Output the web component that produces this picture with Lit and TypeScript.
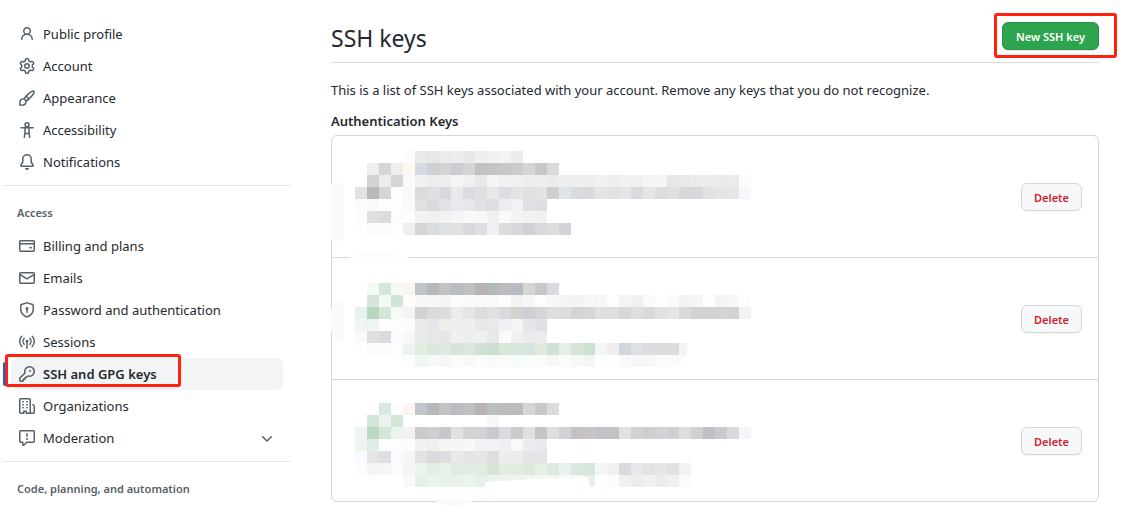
import { LitElement, html, svg, css, nothing } from "lit";
import { customElement, property } from "lit/decorators.js";
import { classMap } from "lit/directives/class-map.js";

const icons: Record<string, unknown> = {
  person: svg`<path d="M10.5 5a2.5 2.5 0 11-5 0 2.5 2.5 0 015 0zm.061 3.073a4 4 0 10-5.123 0 6.004 6.004 0 00-3.431 5.142.75.75 0 001.498.07 4.5 4.5 0 018.99 0 .75.75 0 101.498-.07 6.005 6.005 0 00-3.432-5.142z"/>`,
  gear: svg`<path d="M7.429 1.525a6.593 6.593 0 011.142 0c.036.003.108.036.137.146l.289 1.105c.147.56.55.967.997 1.189.174.086.341.183.501.29.417.278.97.423 1.53.27l1.102-.303c.11-.03.175.016.195.046.219.31.41.641.573.989.014.031.022.11-.059.19l-.815.806c-.411.406-.562.957-.53 1.456a4.588 4.588 0 010 .582c-.032.499.119 1.05.53 1.456l.815.806c.08.08.073.159.059.19a6.494 6.494 0 01-.573.99c-.02.029-.086.074-.195.045l-1.103-.303c-.559-.153-1.112-.008-1.529.27-.16.107-.327.204-.5.29-.449.222-.851.628-.998 1.189l-.289 1.105c-.029.11-.101.143-.137.146a6.613 6.613 0 01-1.142 0c-.036-.003-.108-.037-.137-.146l-.289-1.105c-.147-.56-.55-.967-.997-1.189a4.502 4.502 0 01-.501-.29c-.417-.278-.97-.423-1.53-.27l-1.102.303c-.11.03-.175-.016-.195-.046a6.492 6.492 0 01-.573-.989c-.014-.031-.022-.11.059-.19l.815-.806c.411-.406.562-.957.53-1.456a4.587 4.587 0 010-.582c.032-.499-.119-1.05-.53-1.456l-.815-.806c-.08-.08-.073-.159-.059-.19a6.44 6.44 0 01.573-.99c.02-.029.086-.075.195-.045l1.103.303c.559.153 1.112.008 1.529-.27.16-.107.327-.204.5-.29.449-.222.851-.628.998-1.189l.289-1.105c.029-.11.101-.143.137-.146zM8 0c-.236 0-.47.01-.701.03-.743.065-1.29.615-1.458 1.261l-.29 1.106c-.017.066-.078.158-.211.224a5.994 5.994 0 00-.668.386c-.123.082-.233.09-.3.071L3.27 2.776c-.644-.177-1.392.02-1.82.63a7.977 7.977 0 00-.704 1.217c-.315.675-.111 1.422.363 1.891l.815.806c.05.048.098.147.088.294a6.084 6.084 0 000 .772c.01.147-.038.246-.088.294l-.815.806c-.474.469-.678 1.216-.363 1.891.2.428.436.835.704 1.218.428.609 1.176.806 1.82.63l1.103-.303c.066-.019.176-.011.299.071.213.143.436.272.668.386.133.066.194.158.212.224l.289 1.106c.169.646.715 1.196 1.458 1.26a8.094 8.094 0 001.402 0c.743-.064 1.29-.614 1.458-1.26l.29-1.106c.017-.066.078-.158.211-.224a5.98 5.98 0 00.668-.386c.123-.082.233-.09.3-.071l1.102.302c.644.177 1.392-.02 1.82-.63.268-.382.505-.789.704-1.217.315-.675.111-1.422-.364-1.891l-.814-.806c-.05-.048-.098-.147-.088-.294a6.1 6.1 0 000-.772c-.01-.147.039-.246.088-.294l.814-.806c.475-.469.679-1.216.364-1.891a7.992 7.992 0 00-.704-1.218c-.428-.609-1.176-.806-1.82-.63l-1.103.303c-.066.019-.176.011-.299-.071a5.991 5.991 0 00-.668-.386c-.133-.066-.194-.158-.212-.224L10.16 1.29C9.99.645 9.444.095 8.701.031A8.094 8.094 0 008 0zm1.5 8a1.5 1.5 0 11-3 0 1.5 1.5 0 013 0zM11 8a3 3 0 11-6 0 3 3 0 016 0z"/>`,
  brush: svg`<path d="M11.134 1.535C9.722 2.562 8.16 4.057 6.889 5.312 5.8 6.387 5.041 7.401 4.575 8.294a3.745 3.745 0 00-3.227 1.054c-.43.431-.69 1.066-.86 1.657a11.982 11.982 0 00-.358 1.914A21.263 21.263 0 000 15.203v.054l.75-.007-.007.75h.054a14.404 14.404 0 00.654-.012 21.243 21.243 0 001.63-.118c.62-.07 1.3-.18 1.914-.357.592-.17 1.226-.43 1.657-.861a3.745 3.745 0 001.055-3.217c.908-.461 1.942-1.216 3.04-2.3 1.279-1.262 2.764-2.825 3.775-4.249.501-.706.923-1.428 1.125-2.096.2-.659.235-1.469-.368-2.07-.606-.607-1.42-.55-2.069-.34-.66.213-1.376.646-2.076 1.155zm-3.95 8.48a3.76 3.76 0 00-1.19-1.192 9.758 9.758 0 011.161-1.607l1.658 1.658a9.853 9.853 0 01-1.63 1.142zM12.016 2.749c-1.224.89-2.605 2.189-3.822 3.384l1.718 1.718c1.21-1.205 2.51-2.597 3.387-3.833.47-.662.78-1.227.912-1.662.134-.444.032-.551.009-.575h-.001V1.78c-.014-.014-.112-.113-.548.027-.432.14-.995.462-1.655.942zM1.62 13.089a19.56 19.56 0 00-.104 1.395 19.55 19.55 0 001.396-.104 10.528 10.528 0 001.668-.309c.526-.151.856-.325 1.011-.48a2.25 2.25 0 00-3.182-3.182c-.155.155-.329.485-.48 1.01a10.515 10.515 0 00-.309 1.67z"/>`,
  accessibility: svg`<g class="line"><circle cx="8" cy="2.75" r="2"/><path d="M1.9 5.75h12.2M6 6v4.6l-.7 4.6M10 6v4.6l.7 4.6M6.2 11.5h3.6"/></g>`,
  bell: svg`<path d="M8 16a2 2 0 001.985-1.75c.017-.137-.097-.25-.235-.25h-3.5c-.138 0-.252.113-.235.25A2 2 0 008 16z"/><path d="M8 1.5A3.5 3.5 0 004.5 5v2.947c0 .346-.102.683-.294.97l-1.703 2.556a.018.018 0 00-.003.01l.001.006c0 .002.002.004.004.006a.017.017 0 00.006.004l.007.001h10.964l.007-.001a.016.016 0 00.006-.004.016.016 0 00.004-.006l.001-.007a.017.017 0 00-.003-.01l-1.703-2.554a1.75 1.75 0 01-.294-.97V5A3.5 3.5 0 008 1.5zM3 5a5 5 0 0110 0v2.947c0 .05.015.098.042.139l1.703 2.555A1.518 1.518 0 0113.482 13H2.518a1.518 1.518 0 01-1.263-2.36l1.703-2.554A.25.25 0 003 7.947V5z"/>`,
  card: svg`<path d="M10.75 9a.75.75 0 000 1.5h1.5a.75.75 0 000-1.5h-1.5z"/><path d="M0 3.75C0 2.784.784 2 1.75 2h12.5c.966 0 1.75.784 1.75 1.75v8.5A1.75 1.75 0 0114.25 14H1.75A1.75 1.75 0 010 12.25v-8.5zm14.5 0V5h-13V3.75a.25.25 0 01.25-.25h12.5a.25.25 0 01.25.25zm0 2.75h-13v5.75c0 .138.112.25.25.25h12.5a.25.25 0 00.25-.25V6.5z"/>`,
  mail: svg`<path d="M1.75 2A1.75 1.75 0 000 3.75v8.5C0 13.216.784 14 1.75 14h12.5A1.75 1.75 0 0016 12.25v-8.5A1.75 1.75 0 0014.25 2H1.75zM14.5 4.07v-.32a.25.25 0 00-.25-.25H1.75a.25.25 0 00-.25.25v.32L8 7.88l6.5-3.81zm-13 1.74v6.441c0 .138.112.25.25.25h12.5a.25.25 0 00.25-.25V5.809L8.38 9.397a.75.75 0 01-.76 0L1.5 5.809z"/>`,
  shield: svg`<path d="M8.533.133a1.75 1.75 0 00-1.066 0l-5.25 1.68A1.75 1.75 0 001 3.48V7c0 1.566.32 3.182 1.303 4.682.983 1.498 2.585 2.813 5.032 3.855a1.7 1.7 0 001.33 0c2.447-1.042 4.049-2.357 5.032-3.855C14.68 10.182 15 8.566 15 7V3.48a1.75 1.75 0 00-1.217-1.667L8.533.133zm-.61 1.429a.25.25 0 01.153 0l5.25 1.68a.25.25 0 01.174.238V7c0 1.358-.275 2.666-1.057 3.86-.784 1.194-2.121 2.34-4.366 3.297a.2.2 0 01-.154 0c-2.245-.956-3.582-2.104-4.366-3.298C2.775 9.666 2.5 8.36 2.5 7V3.48a.25.25 0 01.174-.237l5.25-1.68zM9.5 6.5a1.5 1.5 0 01-.75 1.3v2.45a.75.75 0 01-1.5 0V7.8A1.5 1.5 0 119.5 6.5z"/>`,
  broadcast: svg`<path d="M8.75 8.582a1.5 1.5 0 10-1.5 0v5.668a.75.75 0 001.5 0V8.582z"/><g class="line"><path d="M2.8 2.25a7.2 7.2 0 000 10.1M13.2 2.25a7.2 7.2 0 010 10.1M5.15 4.4a4.2 4.2 0 000 5.8M10.85 4.4a4.2 4.2 0 010 5.8"/></g>`,
  key: svg`<path d="M6.5 5.5a4 4 0 112.731 3.795.75.75 0 00-.768.18L7.44 10.5H6.25a.75.75 0 00-.75.75v1.19l-.06.06H4.25a.75.75 0 00-.75.75v1.19l-.06.06H1.75a.25.25 0 01-.25-.25v-1.69l5.024-5.023a.75.75 0 00.181-.768A3.995 3.995 0 016.5 5.5zm4-5.5a5.5 5.5 0 00-5.348 6.788L.22 11.72a.75.75 0 00-.22.53v2C0 15.216.784 16 1.75 16h2a.75.75 0 00.53-.22l.5-.5a.75.75 0 00.22-.53V14h.75a.75.75 0 00.53-.22l.5-.5a.75.75 0 00.22-.53V12h.75a.75.75 0 00.53-.22l.932-.932A5.5 5.5 0 1010.5 0zm.5 6a1 1 0 100-2 1 1 0 000 2z"/>`,
  organization: svg`<path d="M1.5 14.25c0 .138.112.25.25.25H4v-1.25a.75.75 0 01.75-.75h2.5a.75.75 0 01.75.75v1.25h2.25a.25.25 0 00.25-.25V1.75a.25.25 0 00-.25-.25h-8.5a.25.25 0 00-.25.25v12.5zM1.75 16A1.75 1.75 0 010 14.25V1.75C0 .784.784 0 1.75 0h8.5C11.216 0 12 .784 12 1.75v12.5c0 .085-.006.168-.018.25h2.268a.25.25 0 00.25-.25V8.285a.25.25 0 00-.111-.208l-1.055-.703a.75.75 0 11.832-1.248l1.055.703c.487.325.779.871.779 1.456v5.965A1.75 1.75 0 0114.25 16h-3.5a.75.75 0 01-.197-.026c-.099.017-.2.026-.303.026h-3a.75.75 0 01-.75-.75V14h-1v1.25a.75.75 0 01-.75.75h-3zM3 3.75A.75.75 0 013.75 3h.5a.75.75 0 010 1.5h-.5A.75.75 0 013 3.75zM3.75 6a.75.75 0 000 1.5h.5a.75.75 0 000-1.5h-.5zM3 9.75A.75.75 0 013.75 9h.5a.75.75 0 010 1.5h-.5A.75.75 0 013 9.75zM7.75 9a.75.75 0 000 1.5h.5a.75.75 0 000-1.5h-.5zM7 6.75A.75.75 0 017.75 6h.5a.75.75 0 010 1.5h-.5A.75.75 0 017 6.75zM7.75 3a.75.75 0 000 1.5h.5a.75.75 0 000-1.5h-.5z"/>`,
  report: svg`<path d="M0 1.75C0 .784.784 0 1.75 0h12.5C15.216 0 16 .784 16 1.75v9.5A1.75 1.75 0 0114.25 13H8.06l-2.573 2.573A1.457 1.457 0 013 14.543V13H1.75A1.75 1.75 0 010 11.25v-9.5zm1.75-.25a.25.25 0 00-.25.25v9.5c0 .138.112.25.25.25h2a.75.75 0 01.75.75v2.19l2.72-2.72a.75.75 0 01.53-.22h6.5a.25.25 0 00.25-.25v-9.5a.25.25 0 00-.25-.25H1.75zM9 9a1 1 0 11-2 0 1 1 0 012 0zm-.25-5.25a.75.75 0 00-1.5 0v2.5a.75.75 0 001.5 0v-2.5z"/>`,
  chevron: svg`<path d="M12.78 6.22a.75.75 0 010 1.06l-4.25 4.25a.75.75 0 01-1.06 0L3.22 7.28a.75.75 0 011.06-1.06L8 9.94l3.72-3.72a.75.75 0 011.06 0z"/>`,
};

const icon = (name: string) =>
  html`<svg class="icon" viewBox="0 0 16 16" width="16" height="16" aria-hidden="true">${icons[name]}</svg>`;

interface NavItem {
  label: string;
  icon: string;
  current?: boolean;
  expandable?: boolean;
}

const groups: { title?: string; items: NavItem[] }[] = [
  {
    items: [
      { label: "Public profile", icon: "person" },
      { label: "Account", icon: "gear" },
      { label: "Appearance", icon: "brush" },
      { label: "Accessibility", icon: "accessibility" },
      { label: "Notifications", icon: "bell" },
    ],
  },
  {
    title: "Access",
    items: [
      { label: "Billing and plans", icon: "card" },
      { label: "Emails", icon: "mail" },
      { label: "Password and authentication", icon: "shield" },
      { label: "Sessions", icon: "broadcast" },
      { label: "SSH and GPG keys", icon: "key", current: true },
      { label: "Organizations", icon: "organization" },
      { label: "Moderation", icon: "report", expandable: true },
    ],
  },
  { title: "Code, planning, and automation", items: [] },
];

/* Each key is a redacted mosaic: rows of 12px tiles, "-" leaves a tile empty. */
interface KeyMosaic {
  top: number;
  rows: string[];
  smudges: unknown;
}

const keys: KeyMosaic[] = [
  {
    top: 15,
    rows: [
      "- - - - fcfcfc e9e9e9 e7e7e7 eaecea ecedef e6e8ea efefef eff0ef f3f3f3 eaecee",
      "- eeeeee d5d6d8 eeeeee fdf8f1 d5d9e1 cfcfd1 d4d5d1 c9ccd2 d3d5d7 c4c1c1 c0c5c7 c6c7c7 cbccd0 d7d5d3 c5c8c9 d9dade",
      "- d2d3d5 ededed d4d6d8 fafafa f1f1f1 eaeeec ebeeec f4f4f4 eef1ef e8e8e8 f4f5f5 f0f1f1 eff0f0 ededed ecefee ececeb eceef0 eeeeee ecefee f1f1f1 eeeeee f0f1f1 eff0ef f3f4f4 f5f5f5 e6e6e6 e9e9e9 ebebeb ebebeb ebe9eb ebebeb fcfcfc",
      "e3e3e3 b8b9bb d6d6d6 fefefe f9f9f8 dadada dee0e7 d9d9db eaeaea dbdce0 dfe0e2 e7e7e8 dcdde3 e4e4e4 e0e0e0 e3e3e4 cecece dfe4e8 dadbde d9dadc e5e5e5 e2e2e2 e4e6e5 dadbde e6e6e6 dddddd dfe1e3 d7d7d7 d6d8dc e2e2e2 e5e5e5 e7e7e7 f7f8fb",
      "fbfbfb fafafa fdfdfd fefefe f9f9f8 dfe1e0 dad9e0 e2e2e2 e8eaf0 e5e7ec e1e1e4 dedfe5 ecedf0 f3f1f3 dfe0e4 dedfe3",
      "fbfcfe dfdfdf dadce1 fbfcfe fdfdfd f3f3f3 f0f0f1 f2f2f2 f5f5f6 f8f9fb f8f8f9 f0f0f1 fafafa f4f4f4 f2f2f2 f0f0f2",
      "fefefe fcfcfc fcfcfc fdfefe efefef d4d5d7 dcdcde dce1e3 e1e1e2 d8d9dc dedfe4 f0f0f0 dcdddf d8d8db d0d1d6 d9d9db dddee0 d3d4d9",
    ],
    smudges: svg`<path fill="#fafafa" d="M0 48l12-1v58l-12-1z"/><path fill="#fbfcfc" d="M18 122q22-12 62 0z"/>`,
  },
  {
    top: 25,
    rows: [
      "- f6faf7 d4e7da f6faf7 faf5f0 bfc5ca b8b8bc c2c2c3 b8bcc1 c0c1c2 b6b3b3 b2b9ba bcbcbf b8bbc1 d5d5d4 c6c9c9 dadbdf",
      "- d4e5da f3f9f5 d0e5d6 fcfcfa f8f8f8 f8f8f8 f4f4f4 fcfcfc f8faf8 f8faf8 f8faf8 fcfcfc f2f2f3 f7f7f7 fdfdfd f8f8f8 f3f5f4 f3f3f3 f8f8f8 f6f6f6 fdfdfd f3f5f4 f0f0f0 f8fbf9 fdfdfd fafafa f3f3f3 f5f5f5 fefefe f4f4f4 f7f8fa fdfdfd",
      "e8f2ec b8d6c0 d3e6d8 f4faf6 f4f4f5 d2d2d2 d7dce0 dddddd ececeb e3e5e7 dadcdb e1e1e2 d9dae0 d4d1ce ced0d8 d4d5d8 dddee0 dcdddb d4d3da d6d6d7 dfe0e3 dddee0 d6d7d9 dededf d9d9d9 e1e1e3 e5e5e5 dadada d0d4d7 d1d2d4 d3d4d6 d2d3d5 f2f2f2",
      "f0f7f3 edf5f1 fdfdfd fdfdfd fdfcfa e9eaea e5e6eb eeeeeb eeeff3 eeeff3 e8e8e9 e9e9ec eff0f4 f6f4f5 e5e6ea e0e1e4",
      "fafafa dfdfdf dadbe1 fcfcfc f8f8f8 e9eaea e6e7ea e7e7e9 eeeff3 edeef0 f0f0f1 e7e8eb fafafa f0f0f0 ebebed ebecee",
      "fdfefe fcfcfc fbfbfb fdfdfd edf3ef e4ece2 dae7de e0e9e0 d6e5d7 dce7df d0e2d6 cde0d0 d9e6da d7e5dc d6e5dc e2eadb d0e2d8 e7ede7 d7e4d6 cce2d5 f4f6f5 f2eeef d2d5dc dfe0e4 dddddf dbdcde dbdcdc f2f3f6",
      "- - - - fdfdfd f0f7f3 f6f9f7 f5f8f7 f8fbf8 f5f9f7 f9fcf8 f6faf8 fafcfa f7fafa f8fcfa f8fbf6 f6f8f5 fcfcfc f5faf6 f1f8f4 fefefe fefefd f8faf9 f7f7f7 f7f7f7 fafafa fafafa fbfbfb",
    ],
    smudges: svg`<path fill="#fafafa" d="M0 52q3-9 12-10v43q-9-4-12-12z"/><path fill="#fff" d="M344 109q11-5 13-24h10v25h-23z"/>`,
  },
  {
    top: 23,
    rows: [
      "- fefefe d8e9df fefefe fbf5f0 c1c6ca b8b8bc c2c3c3 b9bdc2 bfc0c2 b6b3b3 b9c0c0 bcbcbf b9bcc1 d5d5d4 c6c9c9 dadbdf",
      "- d4e6da eaf3ed d3e6d8 - - - - - - - f5f8f7",
      "f0f7f3 bcd9c4 d3e6d9 eaf3ed f3f1f1 cbcbce cecfd3 c7c7c9 e2e1df d3d3d6 d3d3d6 c9cace dbdce0 cacbce e0e0e0 c5c5c5 dddee0 d1d2d4 c3c2c6 c9c5c7 bfc2c7 c2c2c5 e1e2e4 d1d2d4 cecdd0 d2d3d5 cfced2 dedede d0d0d2 c2bfc4 c7cbcf dadada f5f6f9",
      "edf5ef e0ece6 fdfdfd fcfefe fdfcfc f0f2f1 edeff3 f5f5f2 f3f5f9 f8f8f8 f1f2f4 f1f3f7 f0f0f2 f9f9f9 ebecf0 e9eaed",
      "f9fbfe e5e5e7 dddfe5 f9fbfe f5f6f7 e2e4e3 dbdade dddee0 e8e9ec e4e5e8 e6e6e7 dddee4 ecedec ececed e4e5e8 e4e5e8",
      "fcfcfd f3f4f4 f5f6f9 fbfbfb f2f7f4 ebf3eb e2ede4 ebf0e8 dfebe0 e3ece4 e0ebe2 d5e6d7 e3ece2 e1ebe0 dee9df e7efe4 dceae0 ebf2ed dde8dc d5e6da f3f6f5 f3f0f0 dadbe0 e7e8ea e3e3e3 e6e6e8 e2e2e3 f1f2f4",
      "- - - - f8faf8 e6f0e8 ebf3ed e9f2e9 eaf2e9 ebf3ed e7efe9 edf4ef edf4ef edf4ef f2f6f3 f3f7f3 f3f7f3 f5f9f5 f4f8f4 e5f1e9 fefefe fdfcfa eff0f2 ededee f0f0f0 ececee f0f0f0 fafafa",
    ],
    smudges: svg`<path fill="#fff" d="M153 108l2-6 48-3 54-2 2 10v2H153z"/><path fill="#fafafa" d="M104 120h40q-18 11-36 3z"/>`,
  },
];

@customElement("settings-nav")
export class SettingsNav extends LitElement {
  static styles = css`
    :host { display: block; }
    .group { padding: 7px 8px; border-bottom: 1px solid #e3e6ea; }
    .group:first-child { padding-top: 18px; }
    .group:last-child { border-bottom: 0; }
    .title {
      margin: 0;
      padding: 12px 6px 9px;
      font-size: 11px;
      line-height: 16px;
      font-weight: 600;
      color: #57606a;
    }
    .items { list-style: none; margin: 0; padding: 0; }
    .item { position: relative; }
    .link {
      display: flex;
      align-items: center;
      gap: 8px;
      padding: 6px 8px;
      border-radius: 6px;
      line-height: 20px;
      color: #24292f;
      text-decoration: none;
    }
    .label { flex: 1; white-space: nowrap; }
    .current .link { background: #f3f4f6; font-weight: 600; }
    .current::before {
      content: "";
      position: absolute;
      left: -8px;
      top: 4px;
      width: 4px;
      height: 24px;
      border-radius: 6px;
      background: #0969da;
    }
    .current::after {
      content: "";
      position: absolute;
      left: -6px;
      top: -4px;
      width: 170px;
      height: 27px;
      border: 3px solid #ff2211;
      border-radius: 3px;
      pointer-events: none;
    }
    .icon { display: block; flex: none; fill: #57606a; fill-rule: evenodd; }
    .line { fill: none; stroke: #57606a; stroke-width: 1.5; stroke-linecap: round; }
  `;

  render() {
    return html`<nav aria-label="Settings">
      ${groups.map(
        (g) => html`<div class="group">
          ${g.title ? html`<h2 class="title">${g.title}</h2>` : nothing}
          ${g.items.length
            ? html`<ul class="items">
                ${g.items.map(
                  (i) => html`<li class=${classMap({ item: true, current: !!i.current })}>
                    <a class="link" href="#" aria-current=${i.current ? "page" : nothing}>
                      ${icon(i.icon)}<span class="label">${i.label}</span>${i.expandable ? icon("chevron") : nothing}
                    </a>
                  </li>`
                )}
              </ul>`
            : nothing}
        </div>`
      )}
    </nav>`;
  }
}

@customElement("key-row")
export class KeyRow extends LitElement {
  @property({ attribute: false }) mosaic!: KeyMosaic;

  static styles = css`
    :host {
      position: relative;
      display: flex;
      align-items: center;
      justify-content: flex-end;
      padding: 47px 16px 46px;
    }
    .mosaic {
      position: absolute;
      left: -1px;
      top: 0;
      overflow: visible;
      shape-rendering: crispEdges;
    }
    .delete {
      font: 600 11px/20px "Noto Sans", "Open Sans", sans-serif;
      padding: 4px 12px 2px;
      color: #cf222e;
      background: #f6f8fa;
      border: 1px solid #d5d8db;
      border-radius: 6px;
      box-shadow: 0 1px 0 rgba(27, 31, 36, 0.04);
    }
  `;

  render() {
    const { top, rows, smudges } = this.mosaic;
    return html`
      <svg class="mosaic" width="420" height="121" aria-hidden="true">
        ${rows.map((row, y) =>
          row.split(" ").map((c, x) =>
            c === "-"
              ? nothing
              : svg`<rect x=${24 + x * 12} y=${top + y * 12} width="12" height="12" fill=${"#" + c}></rect>`
          )
        )}
        ${smudges}
      </svg>
      <button class="delete" type="button">Delete</button>
    `;
  }
}

@customElement("app-root")
export class AppRoot extends LitElement {
  static styles = css`
    :host {
      display: block;
      font: 13px/20px "Noto Sans", "Open Sans", sans-serif;
      color: #24292f;
      background: #fff;
    }
    .page {
      display: grid;
      grid-template-columns: 288px minmax(0, 1fr);
      gap: 40px;
      padding: 0 26px 0 3px;
    }
    .header {
      display: flex;
      align-items: center;
      justify-content: space-between;
      margin-top: 10px;
      padding-top: 8px;
      border-bottom: 1px solid #d8dee4;
    }
    .heading { margin: 0; padding: 2px 0 6px; font-size: 23px; line-height: 36px; font-weight: 400; }
    .action { position: relative; display: flex; margin-bottom: 8px; }
    .action::after {
      content: "";
      position: absolute;
      inset: -9px -18px -8px -8px;
      border: 3px solid #ff2211;
      border-radius: 3px;
      pointer-events: none;
    }
    .new {
      font: 600 11px/20px "Noto Sans", "Open Sans", sans-serif;
      padding: 4px 13px 2px;
      color: #fff;
      background: #2da44e;
      border: 1px solid #2a9147;
      border-radius: 6px;
      box-shadow: 0 1px 0 rgba(27, 31, 36, 0.1);
    }
    .intro { margin: 17px 0 0; }
    .subhead { margin: 11px 0 4px; font-size: 13px; line-height: 20px; font-weight: 600; }
    .keys {
      list-style: none;
      margin: 0;
      padding: 0;
      border: 1px solid #d0d7de;
      border-radius: 6px;
    }
    .key + .key { border-top: 1px solid #d8dbe1; }
  `;

  render() {
    return html`<div class="page">
      <settings-nav></settings-nav>
      <main>
        <header class="header">
          <h1 class="heading">SSH keys</h1>
          <div class="action"><button class="new" type="button">New SSH key</button></div>
        </header>
        <p class="intro">
          This is a list of SSH keys associated with your account. Remove any keys that you do not recognize.
        </p>
        <h2 class="subhead">Authentication Keys</h2>
        <ul class="keys">
          ${keys.map((k) => html`<li class="key"><key-row .mosaic=${k}></key-row></li>`)}
        </ul>
      </main>
    </div>`;
  }
}
